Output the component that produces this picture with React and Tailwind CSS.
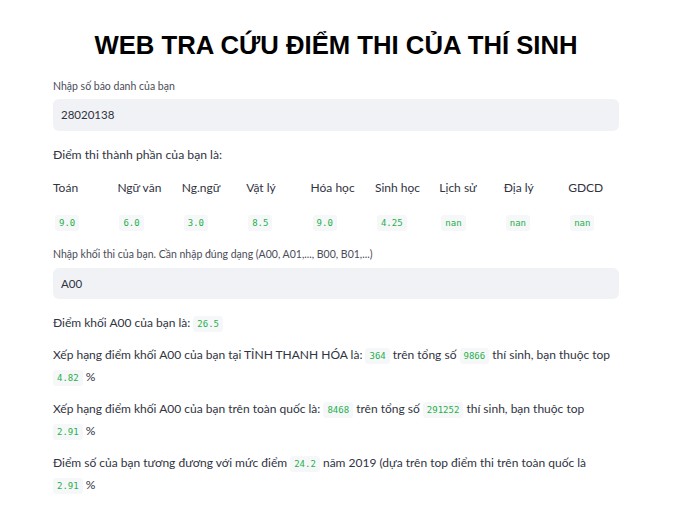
export default function App() {
  const subjects = [
    ["Toán", "9.0"],
    ["Ngữ văn", "6.0"],
    ["Ng.ngữ", "3.0"],
    ["Vật lý", "8.5"],
    ["Hóa học", "9.0"],
    ["Sinh học", "4.25"],
    ["Lịch sử", "nan"],
    ["Địa lý", "nan"],
    ["GDCD", "nan"],
  ];
  const Code = ({ children }) => (
    <span className="inline-block rounded-[3px] bg-[#f6f7f9] px-[4px] py-[1px] text-[9px] leading-[14px] text-[#1fb04a] align-middle [font-family:'DejaVu_Sans_Mono',monospace]">
      {children}
    </span>
  );
  return (
    <div className="w-[679px] h-[511px] bg-white overflow-hidden text-[#31333f] [font-family:Lato,'Noto_Sans',sans-serif]">
      <div className="w-[566px] ml-[53px]">
        <h1 className="pt-[30px] text-center text-[25.7px] leading-[30px] font-bold text-black [font-family:'Liberation_Sans',Arial,sans-serif]">
          WEB TRA CỨU ĐIỂM THI CỦA THÍ SINH
        </h1>
        <div className="mt-[19px] text-[10.5px] leading-[14px] text-[#4a4c57]">Nhập số báo danh của bạn</div>
        <div className="mt-[6px] h-[32px] rounded-[6px] bg-[#f0f2f6] flex items-center px-[8px] text-[11.5px]">28020138</div>
        <div className="mt-[15px] text-[12.2px] leading-[18px]">Điểm thi thành phần của bạn là:</div>
        <div className="mt-[15px] flex">
          {subjects.map(([s]) => (
            <div key={s} className="w-[64.4px] shrink-0 text-[12px] leading-[18px]">{s}</div>
          ))}
        </div>
        <div className="mt-[15px] flex">
          {subjects.map(([s, v]) => (
            <div key={s} className="w-[64.4px] shrink-0 leading-[18px] pl-[2px]"><Code>{v}</Code></div>
          ))}
        </div>
        <div className="mt-[16px] text-[10.5px] leading-[14px] text-[#4a4c57]">Nhập khối thi của bạn. Cần nhập đúng dạng (A00, A01,..., B00, B01,...)</div>
        <div className="mt-[7px] h-[31px] rounded-[6px] bg-[#f0f2f6] flex items-center px-[8px] text-[11.5px]">A00</div>
        <div className="mt-[14px] text-[12px] leading-[20px]">Điểm khối A00 của bạn là: <Code>26.5</Code></div>
        <div className="mt-[11px] text-[12px] leading-[22px]">
          Xếp hạng điểm khối A00 của bạn tại TỈNH THANH HÓA là: <Code>364</Code> trên tổng số <Code>9866</Code> thí sinh, bạn thuộc top<br />
          <Code>4.82</Code> %
        </div>
        <div className="mt-[10px] text-[12px] leading-[22px]">
          Xếp hạng điểm khối A00 của bạn trên toàn quốc là: <Code>8468</Code> trên tổng số <Code>291252</Code> thí sinh, bạn thuộc top<br />
          <Code>2.91</Code> %
        </div>
        <div className="mt-[10px] text-[12px] leading-[22px]">
          Điểm số của bạn tương đương với mức điểm <Code>24.2</Code> năm 2019 (dựa trên top điểm thi trên toàn quốc là<br />
          <Code>2.91</Code> %
        </div>
      </div>
    </div>
  );
}
